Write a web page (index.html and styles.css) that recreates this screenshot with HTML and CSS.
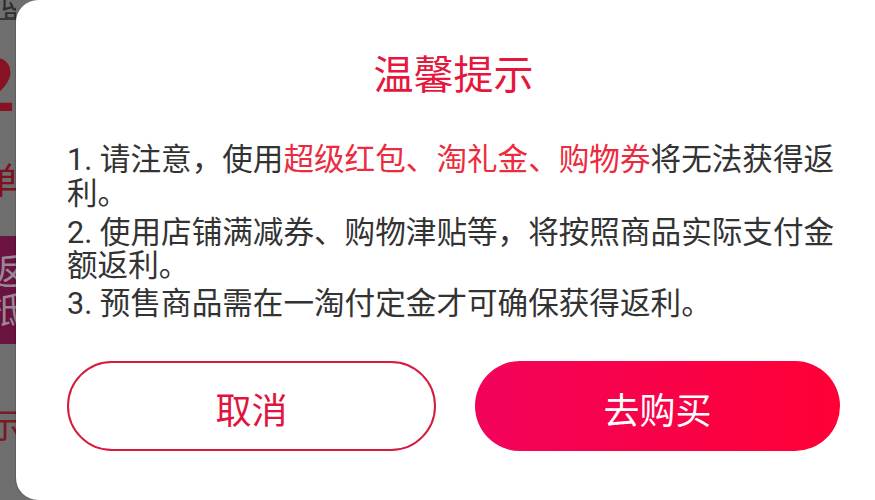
FILE: index.html
```html
<!DOCTYPE html>
<html lang="zh-CN">
<head>
<meta charset="utf-8">
<title>温馨提示</title>
<link rel="stylesheet" href="styles.css">
</head>
<body>
<div class="screen">
  <div class="backdrop">
    <div class="bd-inner">
      <div class="bd-top">留</div>
      <div class="bd-num">2</div>
      <div class="bd-dan">单</div>
      <div class="bd-box">
        <div class="bd-box-t">返</div>
        <div class="bd-box-t">抵</div>
      </div>
      <div class="bd-shi">示</div>
    </div>
  </div>
  <div class="dialog">
    <h1 class="title">温馨提示</h1>
    <div class="body">
      <p class="item">1. 请注意，使用<span class="hl">超级红包、淘礼金、购物券</span>将无法获得返利。</p>
      <p class="item">2. 使用店铺满减券、购物津贴等，将按照商品实际支付金额返利。</p>
      <p class="item">3. 预售商品需在一淘付定金才可确保获得返利。</p>
    </div>
    <div class="actions">
      <button class="btn btn-cancel">取消</button>
      <button class="btn btn-buy">去购买</button>
    </div>
  </div>
</div>
</body>
</html>
```

FILE: styles.css
```css
* { box-sizing: border-box; }
html, body {
  margin: 0;
  padding: 0;
  width: 875px;
  height: 500px;
  overflow: hidden;
  background: #6e6e6e;
  font-family: Roboto, "Noto Sans CJK SC", sans-serif;
}
.screen {
  display: flex;
  width: 875px;
  height: 500px;
  overflow: hidden;
}
.backdrop {
  width: 16px;
  flex-shrink: 0;
  height: 500px;
  overflow: hidden;
  background: #6e6e6e;
}
.bd-inner {
  width: 60px;
  margin-left: -44px;
  display: flex;
  flex-direction: column;
  align-items: flex-end;
  font-family: "Noto Sans CJK SC", sans-serif;
}
.bd-top {
  font-size: 30px;
  line-height: 30px;
  height: 26px;
  margin-top: -6px;
  color: #2e2e2e;
  margin-right: -14px;
  border-bottom: 2px solid #3a3a3a;
  overflow: hidden;
}
.bd-num {
  margin-top: 34px;
  font-size: 74px;
  line-height: 64px;
  height: 64px;
  font-weight: 700;
  color: #861224;
  font-family: Roboto, sans-serif;
  margin-right: 1px;
}
.bd-dan {
  margin-top: 40px;
  font-size: 36px;
  line-height: 40px;
  color: #7e1020;
  margin-right: -3px;
}
.bd-box {
  margin-top: 38px;
  width: 60px;
  height: 108px;
  background: #6a1240;
  display: flex;
  flex-direction: column;
  align-items: flex-end;
  padding-top: 14px;
}
.bd-box-t {
  font-size: 36px;
  line-height: 38px;
  color: #9a8894;
  margin-right: -8px;
}
.bd-shi {
  margin-top: 62px;
  font-size: 34px;
  line-height: 36px;
  color: #7a1a22;
  margin-right: -6px;
}
.dialog {
  width: 875px;
  flex-shrink: 0;
  height: 500px;
  background: #ffffff;
  border-radius: 22px 0 0 22px;
  box-shadow: -1px 0 1px rgba(0,0,0,0.15);
  padding: 50px 51px 0 51px;
}
.title {
  margin: 0;
  font-family: "Noto Sans CJK SC", sans-serif;
  font-weight: 400;
  font-size: 40px;
  line-height: 44px;
  text-align: center;
  color: #e5173c;
}
.body {
  margin-top: 49px;
  margin-right: -14px;
}
.item {
  margin: 0 0 5px 0;
  font-size: 30.6px;
  line-height: 33px;
  color: #333333;
}
.item:first-child { line-height: 34px; }
.hl { color: #ec2b3e; }
.actions {
  margin-top: 41px;
  display: flex;
  gap: 39px;
}
.btn {
  flex: 1;
  height: 90px;
  border-radius: 45px;
  font-family: "Noto Sans CJK SC", sans-serif;
  font-size: 36px;
  padding: 4px 0 0 0;
  cursor: pointer;
}
.btn-cancel {
  background: #ffffff;
  border: 2px solid #d7193c;
  color: #e0143c;
}
.btn-buy {
  border: none;
  background: linear-gradient(90deg, #f2035b 0%, #ff0036 100%);
  color: #ffffff;
}
```
